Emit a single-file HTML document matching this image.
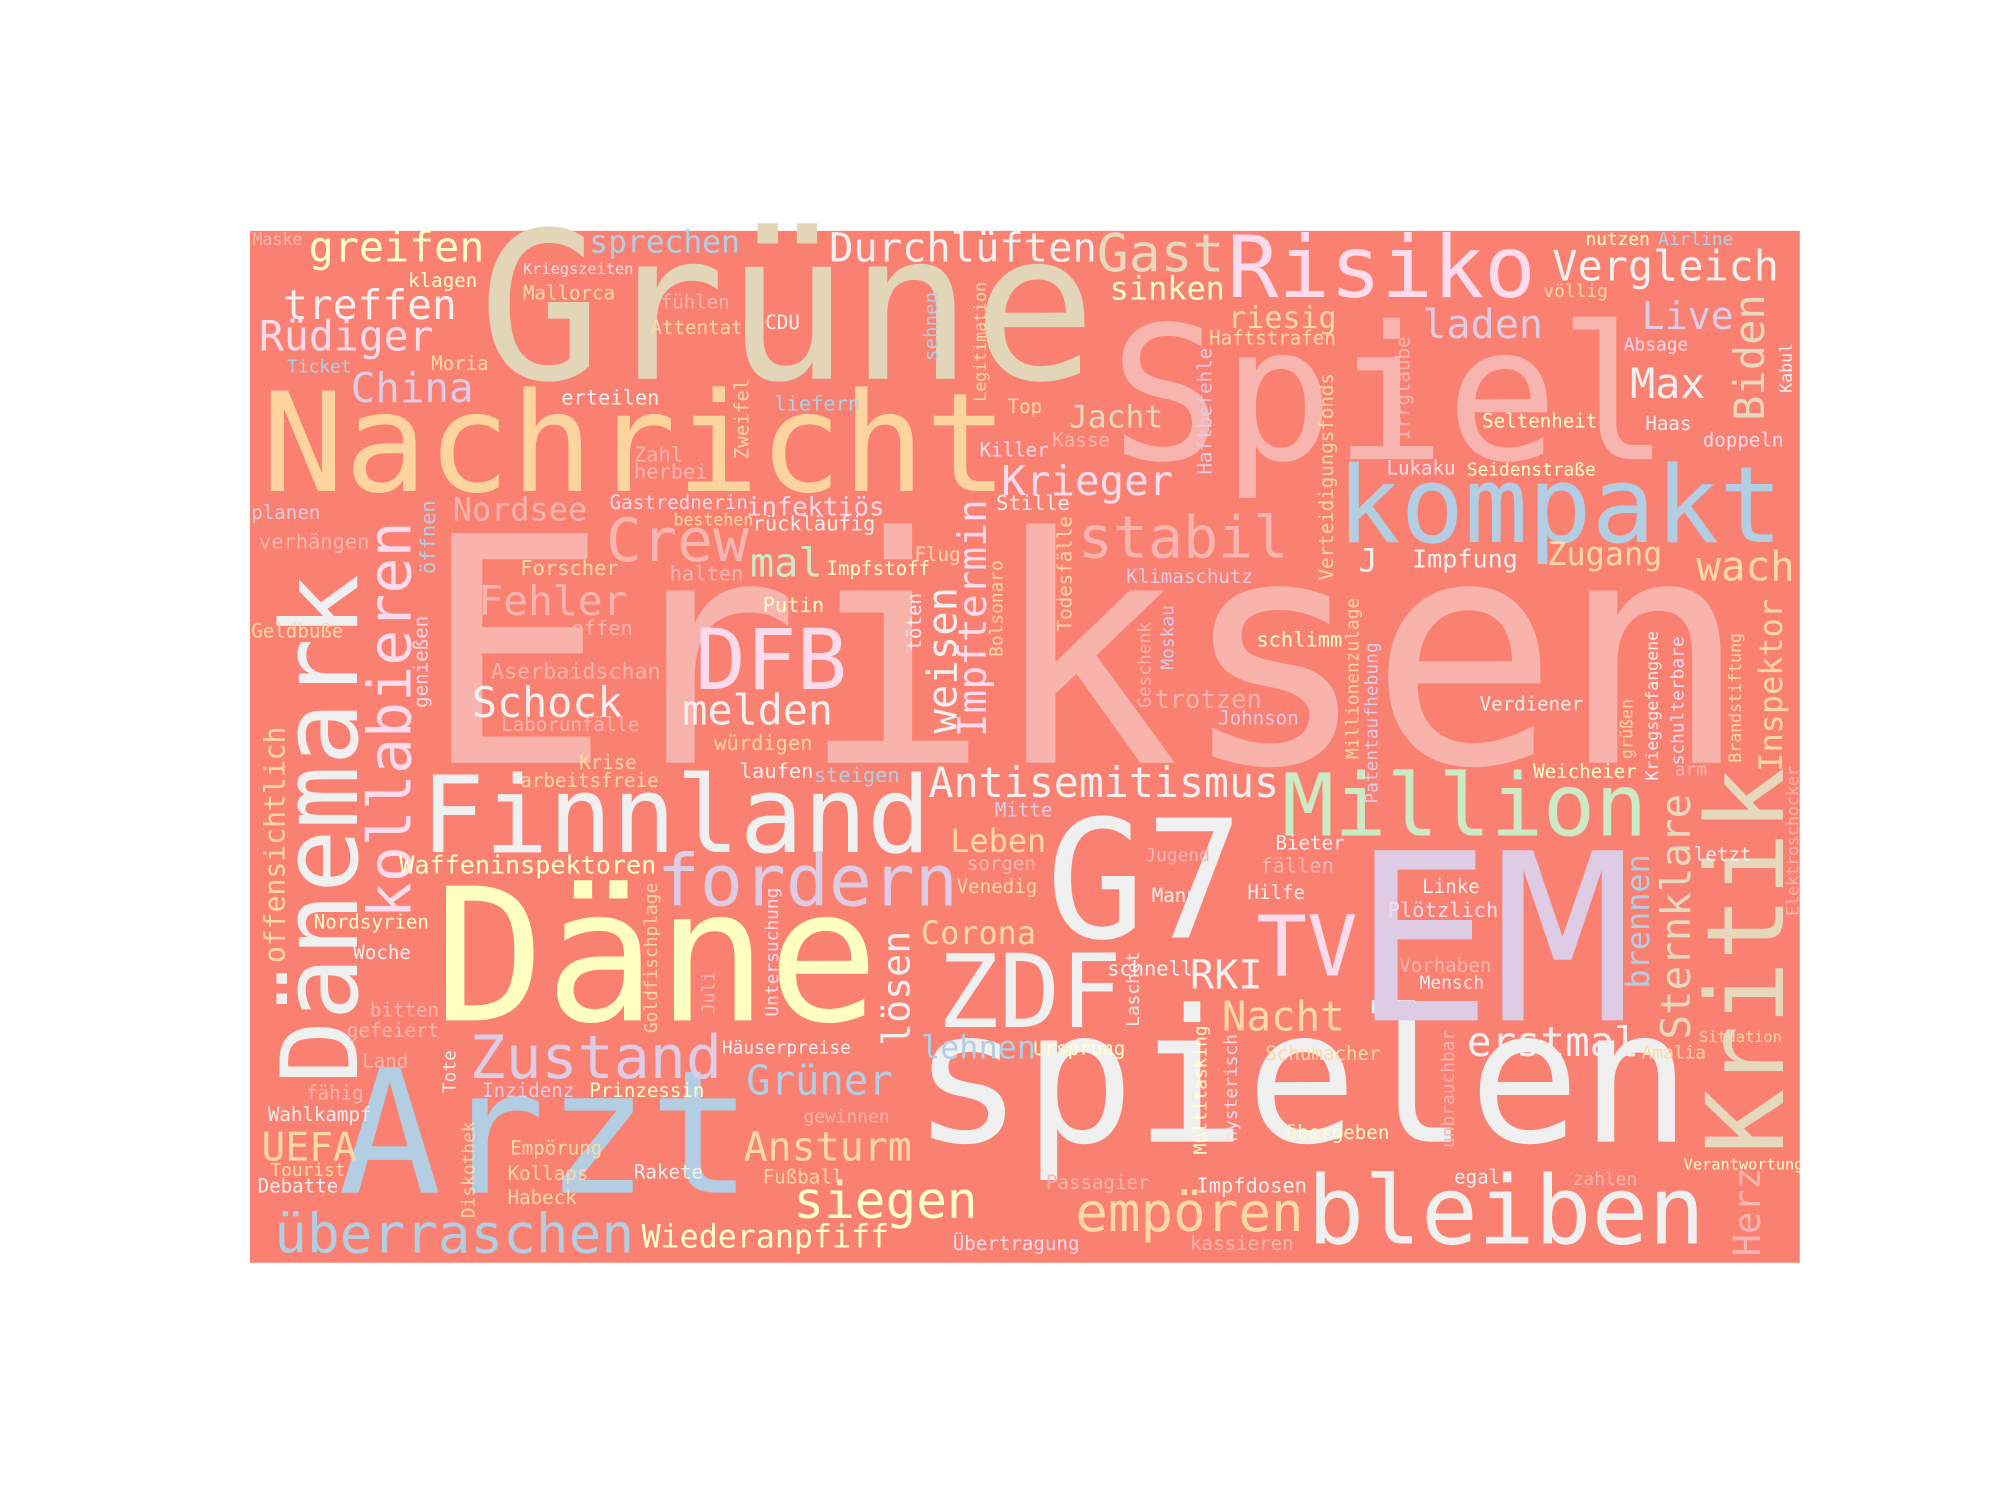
<!DOCTYPE html>
<html><head><meta charset="utf-8"><style>
html,body{margin:0;padding:0;background:#fff;width:2000px;height:1500px;overflow:hidden}
svg{display:block}
text{font-family:"DejaVu Sans Mono","Liberation Mono",monospace}
</style></head><body>
<svg width="2000" height="1500" viewBox="0 0 1568 1176" xmlns="http://www.w3.org/2000/svg">
<rect x="0" y="0" width="1568" height="1176" fill="#fff"/>
<rect x="196" y="181" width="1215" height="809" fill="#fa8072"/>
<g>
<text x="330" y="598" font-size="247" fill="#f9b3ad">Eriksen</text>
<text x="375" y="297" font-size="161" fill="#e2d5b8">Grüne</text>
<text x="870" y="360" font-size="146" fill="#f8b4ae">Spiel</text>
<text x="205" y="385" font-size="108" fill="#fdd49e">Nachricht</text>
<text x="1048" y="425" font-size="83" fill="#b3cde3">kompakt</text>
<text x="340" y="800" font-size="145" fill="#ffffc0">Däne</text>
<text x="265" y="935" font-size="135" fill="#b3cde3">Arzt</text>
<text x="715" y="895" font-size="145" fill="#f0f0f0">spielen</text>
<text x="820" y="735" font-size="129" fill="#f0f0f0">G7</text>
<text x="1060" y="800" font-size="183" fill="#decbe4">EM</text>
<text x="330" y="668" font-size="83" fill="#f0f0f0">Finnland</text>
<text transform="rotate(-90 280 850)" x="280" y="850" font-size="83" fill="#f0f0f0">Dänemark</text>
<text transform="rotate(-90 322 720)" x="322" y="720" font-size="47" fill="#fddaec">kollabieren</text>
<text x="1005" y="655" font-size="68" fill="#ccebc5">Million</text>
<text transform="rotate(-90 1398 905)" x="1398" y="905" font-size="84" fill="#e5d8bd">Kritik</text>
<text x="515" y="710" font-size="56" fill="#decbe4">fordern</text>
<text x="1025" y="975" font-size="74" fill="#f0f0f0">bleiben</text>
<text x="735" y="805" font-size="80" fill="#f0f0f0">ZDF</text>
<text x="985" y="765" font-size="66" fill="#fddaec">TV</text>
<text x="962" y="233" font-size="67" fill="#fddaec">Risiko</text>
<text x="545" y="540" font-size="66" fill="#fddaec">DFB</text>
<text x="368" y="845" font-size="47" fill="#decbe4">Zustand</text>
<text x="215" y="982" font-size="42.6" fill="#b3cde3">überraschen</text>
<text x="475" y="440" font-size="46.5" fill="#f8b4ae">Crew</text>
<text x="845" y="437" font-size="45.7" fill="#f8b4ae">stabil</text>
<text x="650" y="205" font-size="31.7" fill="#f0f0f0">Durchlüften</text>
<text x="860" y="213" font-size="41.5" fill="#e5d8bd">Gast</text>
<text x="1217" y="220" font-size="32.8" fill="#f0f0f0">Vergleich</text>
<text x="242" y="205" font-size="32.7" fill="#ffffcc">greifen</text>
<text x="222" y="250" font-size="32.3" fill="#f0f0f0">treffen</text>
<text x="203" y="275" font-size="32.5" fill="#fddaec">Rüdiger</text>
<text x="275" y="315" font-size="32" fill="#decbe4">China</text>
<text x="462" y="198" font-size="24.5" fill="#b3cde3">sprechen</text>
<text x="870" y="235" font-size="25" fill="#ffffcc">sinken</text>
<text x="963" y="257" font-size="23.5" fill="#fed9a6">riesig</text>
<text x="1115" y="265" font-size="31.5" fill="#decbe4">laden</text>
<text x="1287" y="258" font-size="30" fill="#decbe4">Live</text>
<text transform="rotate(-90 1383 330)" x="1383" y="330" font-size="33" fill="#e5d8bd">Biden</text>
<text x="1278" y="312" font-size="32.7" fill="#f0f0f0">Max</text>
<text x="838" y="335" font-size="24.6" fill="#e5d8bd">Jacht</text>
<text x="785" y="388" font-size="32" fill="#fddaec">Krieger</text>
<text x="355" y="408" font-size="25" fill="#f8b4ae">Nordsee</text>
<text x="588" y="452" font-size="31.5" fill="#ccebc5">mal</text>
<text x="375" y="482" font-size="32.4" fill="#f8b4ae">Fehler</text>
<text x="370" y="562" font-size="32.7" fill="#f0f0f0">Schock</text>
<text x="535" y="568" font-size="32.7" fill="#f0f0f0">melden</text>
<text transform="rotate(-90 750 575)" x="750" y="575" font-size="31.8" fill="#f0f0f0">weisen</text>
<text transform="rotate(-90 773 578)" x="773" y="578" font-size="31" fill="#fddaec">Impftermin</text>
<text x="728" y="625" font-size="32.6" fill="#f0f0f0">Antisemitismus</text>
<text x="745" y="668" font-size="25" fill="#fed9a6">Leben</text>
<text x="722" y="740" font-size="25" fill="#fed9a6">Corona</text>
<text transform="rotate(-90 713 820)" x="713" y="820" font-size="30" fill="#f0f0f0">lösen</text>
<text x="583" y="910" font-size="31.3" fill="#fed9a6">Ansturm</text>
<text x="622" y="955" font-size="40" fill="#ffffcc">siegen</text>
<text x="843" y="965" font-size="42.5" fill="#fed9a6">empören</text>
<text x="585" y="858" font-size="31.8" fill="#b3cde3">Grüner</text>
<text x="722" y="830" font-size="25" fill="#b3cde3">lehnen</text>
<text x="958" y="808" font-size="32" fill="#fed9a6">Nacht</text>
<text x="933" y="775" font-size="31.5" fill="#f0f0f0">RKI</text>
<text x="1150" y="828" font-size="32" fill="#f0f0f0">erstmal</text>
<text transform="rotate(-90 1325 815)" x="1325" y="815" font-size="32" fill="#e5d8bd">Sternklare</text>
<text transform="rotate(-90 1293 775)" x="1293" y="775" font-size="25" fill="#b3cde3">brennen</text>
<text transform="rotate(-90 1397 605)" x="1397" y="605" font-size="25" fill="#fed9a6">Inspektor</text>
<text x="1330" y="455" font-size="32" fill="#fed9a6">wach</text>
<text x="1213" y="443" font-size="25" fill="#fed9a6">Zugang</text>
<text x="1107" y="445" font-size="19.7" fill="#f0f0f0">Impfung</text>
<text x="1065" y="448" font-size="25" fill="#f0f0f0">J</text>
<text x="205" y="910" font-size="31" fill="#fed9a6">UEFA</text>
<text transform="rotate(-90 1380 985)" x="1380" y="985" font-size="29" fill="#f8b4ae">Herz</text>
<text x="503" y="978" font-size="24.8" fill="#ffffcc">Wiederanpfiff</text>
<text x="313" y="685" font-size="19.7" fill="#ffffcc">Waffeninspektoren</text>
<text transform="rotate(-90 223 755)" x="223" y="755" font-size="22" fill="#fed9a6">offensichtlich</text>

<text x="198" y="192" font-size="13" fill="#f8b4ae">Maske</text>
<text x="320" y="225" font-size="15" fill="#ffffcc">klagen</text>
<text x="410" y="215" font-size="12" fill="#fddaec">Kriegszeiten</text>
<text x="410" y="235" font-size="15" fill="#fed9a6">Mallorca</text>
<text x="518" y="242" font-size="15" fill="#f8b4ae">fühlen</text>
<text x="510" y="262" font-size="15" fill="#fed9a6">Attentat</text>
<text x="600" y="258" font-size="15" fill="#f0f0f0">CDU</text>
<text x="225" y="292" font-size="14" fill="#b3cde3">Ticket</text>
<text x="338" y="290" font-size="15" fill="#fed9a6">Moria</text>
<text x="440" y="317" font-size="16" fill="#f0f0f0">erteilen</text>
<text x="607" y="322" font-size="16" fill="#b3cde3">liefern</text>
<text transform="rotate(-90 587 360)" x="587" y="360" font-size="15" fill="#fed9a6">Zweifel</text>
<text transform="rotate(-90 735 283)" x="735" y="283" font-size="15" fill="#b3cde3">sehnen</text>
<text transform="rotate(-90 773 315)" x="773" y="315" font-size="13" fill="#fed9a6">Legitimation</text>
<text x="790" y="324" font-size="15" fill="#fed9a6">Top</text>
<text x="768" y="358" font-size="15" fill="#fddaec">Killer</text>
<text x="825" y="350" font-size="15" fill="#f8b4ae">Kasse</text>
<text x="497" y="362" font-size="16" fill="#f8b4ae">Zahl</text>
<text x="497" y="375" font-size="16" fill="#f8b4ae">herbei</text>
<text x="478" y="399" font-size="15" fill="#fddaec">Gastrednerin</text>
<text x="585" y="404" font-size="20" fill="#fddaec">infektiös</text>
<text x="528" y="412" font-size="13" fill="#fed9a6">bestehen</text>
<text x="590" y="416" font-size="16" fill="#f0f0f0">rückläufig</text>
<text x="197" y="407" font-size="15" fill="#decbe4">planen</text>
<text x="203" y="430" font-size="16" fill="#f8b4ae">verhängen</text>
<text transform="rotate(-90 341 450)" x="341" y="450" font-size="16" fill="#b3cde3">öffnen</text>
<text x="781" y="400" font-size="16" fill="#f0f0f0">Stille</text>
<text x="408" y="451" font-size="16" fill="#fed9a6">Forscher</text>
<text x="525" y="455" font-size="16" fill="#f8b4ae">halten</text>
<text x="648" y="451" font-size="15" fill="#ffffcc">Impfstoff</text>
<text x="717" y="440" font-size="15" fill="#fed9a6">Flug</text>
<text x="598" y="480" font-size="16" fill="#ffffcc">Putin</text>
<text x="448" y="498" font-size="16" fill="#f8b4ae">offen</text>
<text x="197" y="500" font-size="15" fill="#fed9a6">Geldbuße</text>
<text transform="rotate(-90 335 555)" x="335" y="555" font-size="15" fill="#fddaec">genießen</text>
<text x="385" y="532" font-size="17" fill="#f8b4ae">Aserbaidschan</text>
<text x="393" y="573" font-size="15" fill="#f8b4ae">Laborunfälle</text>
<text x="560" y="588" font-size="16" fill="#fed9a6">würdigen</text>
<text transform="rotate(-90 722 510)" x="722" y="510" font-size="15" fill="#f0f0f0">töten</text>
<text transform="rotate(-90 786 515)" x="786" y="515" font-size="14" fill="#fed9a6">Bolsonaro</text>
<text transform="rotate(-90 840 495)" x="840" y="495" font-size="15" fill="#fed9a6">Todesfälle</text>
<text transform="rotate(-90 902 555)" x="902" y="555" font-size="14" fill="#f8b4ae">Geschenk</text>
<text transform="rotate(-90 920 525)" x="920" y="525" font-size="14" fill="#decbe4">Moskau</text>
<text x="883" y="457" font-size="15" fill="#decbe4">Klimaschutz</text>
<text transform="rotate(-90 950 372)" x="950" y="372" font-size="15" fill="#decbe4">Haftbefehle</text>
<text x="948" y="270" font-size="15" fill="#fed9a6">Haftstrafen</text>
<text transform="rotate(-90 1045 455)" x="1045" y="455" font-size="15" fill="#fed9a6">Verteidigungsfonds</text>
<text transform="rotate(-90 1105 345)" x="1105" y="345" font-size="15" fill="#f8b4ae">Irrglaube</text>
<text transform="rotate(-90 1065 595)" x="1065" y="595" font-size="14" fill="#fed9a6">Millionenzulage</text>
<text transform="rotate(-90 1080 630)" x="1080" y="630" font-size="14" fill="#decbe4">Patentaufhebung</text>
<text x="985" y="507" font-size="16" fill="#ffffcc">schlimm</text>
<text x="905" y="555" font-size="20" fill="#f8b4ae">trotzen</text>
<text x="955" y="568" font-size="15" fill="#decbe4">Johnson</text>
<text x="1160" y="557" font-size="15" fill="#f0f0f0">Verdiener</text>
<text x="1087" y="372" font-size="15" fill="#fddaec">Lukaku</text>
<text x="1150" y="373" font-size="14" fill="#ffffcc">Seidenstraße</text>
<text x="1162" y="335" font-size="15" fill="#ffffcc">Seltenheit</text>
<text x="1290" y="337" font-size="15" fill="#f0f0f0">Haas</text>
<text x="1335" y="350" font-size="15" fill="#fddaec">doppeln</text>
<text x="1273" y="275" font-size="14" fill="#fddaec">Absage</text>
<text transform="rotate(-90 1405 308)" x="1405" y="308" font-size="13" fill="#f0f0f0">Kabul</text>
<text x="1243" y="192" font-size="14" fill="#ffffcc">nutzen</text>
<text x="1300" y="192" font-size="14" fill="#b3cde3">Airline</text>
<text x="1210" y="233" font-size="14" fill="#fed9a6">völlig</text>
<text transform="rotate(-90 1300 612)" x="1300" y="612" font-size="13" fill="#f0f0f0">Kriegsgefangene</text>
<text transform="rotate(-90 1320 600)" x="1320" y="600" font-size="14" fill="#fddaec">schulterbare</text>
<text transform="rotate(-90 1280 595)" x="1280" y="595" font-size="13" fill="#fed9a6">grüßen</text>
<text transform="rotate(-90 1365 598)" x="1365" y="598" font-size="13" fill="#fed9a6">Brandstiftung</text>
<text transform="rotate(-90 1410 718)" x="1410" y="718" font-size="13" fill="#f8b4ae">Elektroschocker</text>
<text x="1313" y="608" font-size="14" fill="#f8b4ae">arm</text>
<text x="1202" y="610" font-size="15" fill="#ffffcc">Weicheier</text>
<text x="1328" y="675" font-size="15" fill="#f0f0f0">letzt</text>
<text x="1000" y="666" font-size="15" fill="#f0f0f0">Bieter</text>
<text x="988" y="684" font-size="16" fill="#f8b4ae">fällen</text>
<text x="1115" y="700" font-size="15" fill="#f0f0f0">Linke</text>
<text x="1088" y="719" font-size="16" fill="#fddaec">Plötzlich</text>
<text x="978" y="705" font-size="15" fill="#f0f0f0">Hilfe</text>
<text x="1097" y="762" font-size="15" fill="#f8b4ae">Vorhaben</text>
<text x="1113" y="775" font-size="14" fill="#f0f0f0">Mensch</text>
<text x="1332" y="817" font-size="12" fill="#fed9a6">Situation</text>
<text x="1287" y="830" font-size="14" fill="#fed9a6">Amalia</text>
<text x="992" y="831" font-size="15" fill="#fed9a6">Schumacher</text>
<text transform="rotate(-90 1140 900)" x="1140" y="900" font-size="14" fill="#f8b4ae">unbrauchbar</text>
<text x="1008" y="893" font-size="15" fill="#ffffcc">übergeben</text>
<text x="1140" y="928" font-size="15" fill="#f0f0f0">egal</text>
<text x="1233" y="929" font-size="14" fill="#f8b4ae">zahlen</text>
<text x="1320" y="917" font-size="12" fill="#ffffcc">Verantwortung</text>
<text x="938" y="935" font-size="16" fill="#f0f0f0">Impfdosen</text>
<text x="820" y="932" font-size="15" fill="#f8b4ae">Passagier</text>
<text x="933" y="980" font-size="15" fill="#f8b4ae">kassieren</text>
<text x="747" y="980" font-size="15" fill="#fddaec">Übertragung</text>
<text x="630" y="880" font-size="14" fill="#f8b4ae">gewinnen</text>
<text x="598" y="928" font-size="15" fill="#fed9a6">Fußball</text>
<text x="497" y="924" font-size="15" fill="#f0f0f0">Rakete</text>
<text x="398" y="925" font-size="15" fill="#fed9a6">Kollaps</text>
<text x="398" y="944" font-size="15" fill="#fed9a6">Habeck</text>
<text x="400" y="905" font-size="15" fill="#fed9a6">Empörung</text>
<text x="462" y="860" font-size="15" fill="#ffffcc">Prinzessin</text>
<text x="378" y="860" font-size="15" fill="#decbe4">Inzidenz</text>
<text x="566" y="826" font-size="14" fill="#f0f0f0">Häuserpreise</text>
<text x="810" y="827" font-size="15" fill="#ffffcc">Ursprung</text>
<text transform="rotate(-90 893 805)" x="893" y="805" font-size="14" fill="#f0f0f0">Laschet</text>
<text transform="rotate(-90 946 905)" x="946" y="905" font-size="14" fill="#ffffcc">Multitasking</text>
<text transform="rotate(-90 970 895)" x="970" y="895" font-size="14" fill="#fddaec">hysterisch</text>
<text x="868" y="765" font-size="16" fill="#f0f0f0">schnell</text>
<text x="903" y="707" font-size="15" fill="#f0f0f0">Mann</text>
<text x="898" y="675" font-size="14" fill="#f8b4ae">Jugend</text>
<text x="750" y="700" font-size="15" fill="#fed9a6">Venedig</text>
<text x="758" y="682" font-size="15" fill="#f8b4ae">sorgen</text>
<text x="780" y="640" font-size="15" fill="#decbe4">Mitte</text>
<text x="580" y="610" font-size="16" fill="#f0f0f0">laufen</text>
<text x="638" y="613" font-size="16" fill="#b3cde3">steigen</text>
<text x="454" y="603" font-size="15" fill="#fed9a6">Krise</text>
<text x="408" y="617" font-size="15" fill="#fed9a6">arbeitsfreie</text>
<text x="246" y="728" font-size="15" fill="#ffffcc">Nordsyrien</text>
<text x="277" y="752" font-size="15" fill="#f0f0f0">Woche</text>
<text x="290" y="797" font-size="15" fill="#f8b4ae">bitten</text>
<text x="272" y="813" font-size="15" fill="#f8b4ae">gefeiert</text>
<text x="284" y="837" font-size="15" fill="#f8b4ae">Land</text>
<text x="240" y="862" font-size="15" fill="#f8b4ae">fähig</text>
<text x="210" y="879" font-size="15" fill="#f0f0f0">Wahlkampf</text>
<text x="212" y="922" font-size="14" fill="#fed9a6">Tourist</text>
<text x="202" y="935" font-size="15" fill="#f0f0f0">Debatte</text>
<text transform="rotate(-90 357 857)" x="357" y="857" font-size="14" fill="#f0f0f0">Tote</text>
<text transform="rotate(-90 372 955)" x="372" y="955" font-size="14" fill="#fed9a6">Diskothek</text>
<text transform="rotate(-90 515 810)" x="515" y="810" font-size="14" fill="#fed9a6">Goldfischplage</text>
<text transform="rotate(-90 560 795)" x="560" y="795" font-size="14" fill="#f8b4ae">Juli</text>
<text transform="rotate(-90 610 797)" x="610" y="797" font-size="14" fill="#fddaec">Untersuchung</text>
</g>
</svg>
</body></html>
